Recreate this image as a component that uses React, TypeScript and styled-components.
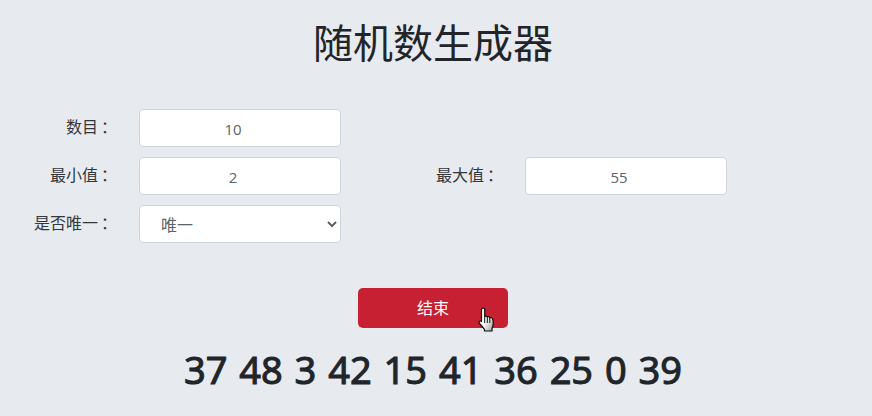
import { createGlobalStyle, styled } from "styled-components";

const GlobalStyle = createGlobalStyle`
  html, body {
    margin: 0;
    padding: 0;
    background: #e7eaef;
    color: #212529;
    font-family: "Noto Sans CJK SC", "Noto Sans", sans-serif;
  }
`;

const Page = styled.div`
  width: 866px;
  height: 416px;
  overflow: hidden;
  display: flex;
  flex-direction: column;
`;

const Title = styled.h1`
  margin: 14px 0 0;
  height: 54px;
  line-height: 54px;
  font-size: 40px;
  font-weight: 400;
  text-align: center;
`;

const Form = styled.div`
  margin-top: 41px;
  display: flex;
  flex-direction: column;
  gap: 10px;
`;

const Row = styled.div`
  display: flex;
`;

const Field = styled.div`
  width: 386px;
  display: flex;
  align-items: center;
  gap: 28px;
`;

const Label = styled.label`
  width: 111px;
  text-align: right;
  font-size: 16px;
  line-height: 36px;
  color: #33373b;
  white-space: nowrap;
  position: relative;
  top: -2px;
  left: 3px;
`;

// 全角冒号要居中，SC 字形是靠左的
const Colon = styled.span`
  font-family: "Noto Sans CJK TC", sans-serif;
  position: relative;
  top: 1px;
  left: -1px;
`;

const Input = styled.input`
  box-sizing: border-box;
  width: 202px;
  height: 38px;
  border: 1px solid #ced4da;
  border-radius: 4px;
  background: #fff;
  color: #5b6269;
  font-family: "Open Sans", "Noto Sans CJK SC", sans-serif;
  font-size: 15px;
  text-align: center;
  padding: 2px 14px 0 0;
  outline: none;
`;

const Select = styled.select`
  box-sizing: border-box;
  width: 202px;
  height: 38px;
  border: 1px solid #ced4da;
  border-radius: 4px;
  background: #fff;
  color: #5b6269;
  font-family: "Noto Sans CJK SC", sans-serif;
  font-size: 16px;
  padding: 0 0 0 17px;
  outline: none;
`;

const Actions = styled.div`
  margin-top: 45px;
  display: flex;
  justify-content: center;
`;

const Button = styled.button`
  position: relative;
  width: 150px;
  height: 40px;
  border: none;
  border-radius: 5px;
  background: #c82033;
  color: #fff;
  font-family: "Noto Sans CJK SC", sans-serif;
  font-size: 16px;
  padding: 0 0 2px;
`;

const Pointer = styled.svg`
  position: absolute;
  left: 120px;
  top: 19px;
  width: 18px;
  height: 25px;
`;

const Result = styled.div`
  margin-top: 16px;
  text-align: center;
  font-family: "Noto Sans", "Noto Sans CJK SC", sans-serif;
  font-size: 38px;
  word-spacing: 2px;
  font-weight: 400;
  -webkit-text-stroke: 1px #212529;
  line-height: 50px;
  color: #212529;
`;

const LABEL_COLON = "：";

export default function App() {
  return (
    <Page>
      <GlobalStyle />
      <Title>随机数生成器</Title>
      <Form>
        <Row>
          <Field>
            <Label>数目<Colon>{LABEL_COLON}</Colon></Label>
            <Input defaultValue="10" />
          </Field>
        </Row>
        <Row>
          <Field>
            <Label>最小值<Colon>{LABEL_COLON}</Colon></Label>
            <Input defaultValue="2" />
          </Field>
          <Field>
            <Label>最大值<Colon>{LABEL_COLON}</Colon></Label>
            <Input defaultValue="55" />
          </Field>
        </Row>
        <Row>
          <Field>
            <Label>是否唯一<Colon>{LABEL_COLON}</Colon></Label>
            <Select defaultValue="1">
              <option value="1">唯一</option>
              <option value="0">不唯一</option>
            </Select>
          </Field>
        </Row>
      </Form>
      <Actions>
        <Button>
          结束
          <Pointer viewBox="0 0 18 25">
            <defs>
              <linearGradient id="hand" x1="0" y1="0" x2="1" y2="1">
                <stop offset="0.5" stopColor="#ffffff" />
                <stop offset="1" stopColor="#9a9a9a" />
              </linearGradient>
            </defs>
            <path
              d="M4 1.500C5 .6 6.400 1 6.700 2.300V9.500C7.500 8.800 9 9 9.300 10C10.200 9.400 11.500 9.700 11.800 10.800C12.700 10.300 14.300 10.700 14.700 12C15.400 14.500 15.400 17 14.800 19C14.400 20.200 14 21 14 22.500V24H6.500V22.500C5 20.500 3.500 18.500 1.500 16.500C.4 15.300 1.500 13.500 3.200 14.300L3.500 14.600V2.500C3.500 2.100 3.700 1.800 4 1.500Z"
              fill="url(#hand)"
              stroke="#0d0d0d"
              strokeWidth="1.200"
              strokeLinejoin="round"
            />
            <path d="M6.700 9.500V16M9.300 10V16M11.800 10.800V16" stroke="#0d0d0d" strokeWidth="1" fill="none" />
          </Pointer>
        </Button>
      </Actions>
      <Result>37 48 3 42 15 41 36 25 0 39</Result>
    </Page>
  );
}
